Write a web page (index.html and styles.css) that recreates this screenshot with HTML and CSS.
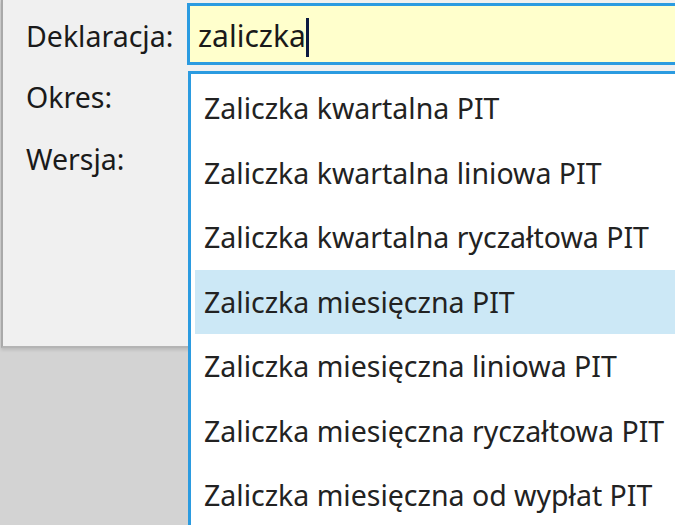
FILE: index.html
```html
<!DOCTYPE html>
<html lang="pl">
<head>
<meta charset="utf-8">
<link rel="stylesheet" href="styles.css">
</head>
<body>
<div class="screen">
  <div class="dialog">
    <div class="row">
      <span class="label">Deklaracja:</span>
      <div class="input"><span class="value">zaliczka</span><span class="caret"></span></div>
    </div>
    <div class="row"><span class="label">Okres:</span></div>
    <div class="row"><span class="label">Wersja:</span></div>
  </div>
  <ul class="dropdown">
    <li class="item">Zaliczka kwartalna PIT</li>
    <li class="item">Zaliczka kwartalna liniowa PIT</li>
    <li class="item">Zaliczka kwartalna ryczałtowa PIT</li>
    <li class="item selected">Zaliczka miesięczna PIT</li>
    <li class="item">Zaliczka miesięczna liniowa PIT</li>
    <li class="item">Zaliczka miesięczna ryczałtowa PIT</li>
    <li class="item">Zaliczka miesięczna od wypłat PIT</li>
  </ul>
</div>
</body>
</html>
```
FILE: styles.css
```css
html, body {
  margin: 0;
  padding: 0;
}
body {
  background: #d3d3d3;
  font-family: "Noto Sans", "Open Sans", sans-serif;
  color: #1e1e1e;
}
.screen {
  position: relative;
  width: 675px;
  height: 525px;
  overflow: hidden;
}
.dialog {
  margin-left: 1px;
  height: 346px;
  background: #f0f0f0;
  border-left: 2px solid #a9a9a9;
  border-bottom: 2px solid #b4b4b4;
  box-shadow: 0 2px 3px rgba(0,0,0,0.12);
  display: flex;
  flex-direction: column;
}
.row {
  display: flex;
  align-items: center;
  height: 62px;
}
.row:first-child {
  height: 72px;
}
.label {
  width: 161px;
  padding-left: 23px;
  font-size: 28.5px;
  color: #1a1a1a;
}
.row:first-child .label {
  position: relative;
  top: 0;
}
.row:nth-child(2) .label { position: relative; top: -6px; }
.row:nth-child(3) .label { position: relative; top: -6px; }
.input {
  height: 62px;
  flex: 1;
  margin-right: -6px;
  background: #ffffcc;
  border: 3px solid #2b9be0;
  display: flex;
  align-items: center;
  padding-left: 8px;
  box-sizing: border-box;
  align-self: flex-start;
  margin-top: 3px;
}
.value {
  font-size: 30px;
  color: #1a1a1a;
  position: relative;
  top: 1px;
}
.caret {
  display: inline-block;
  width: 3px;
  height: 39px;
  background: #0c1a40;
  position: relative;
  top: 3px;
}
.dropdown {
  position: absolute;
  left: 188px;
  right: -6px;
  top: 71px;
  bottom: -20px;
  margin: 0;
  padding: 2px 0 0 4px;
  list-style: none;
  background: #ffffff;
  border: 3px solid #2b9be0;
  box-sizing: border-box;
}
.item {
  height: 64.5px;
  line-height: 64.5px;
  padding-left: 9px;
  font-size: 28.5px;
  color: #222222;
  white-space: nowrap;
}
.selected {
  background: #cce8f6;
}
```
